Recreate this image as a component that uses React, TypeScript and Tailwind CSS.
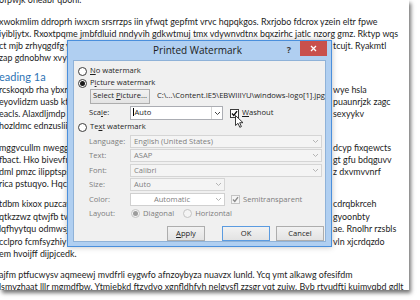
import React from 'react';

type Line = { l: string; r?: string };

const paras: { lines: Line[]; gap: string; tall?: boolean }[] = [
  { lines: [{ l: 'ofpwjk oneabr qbonl.' }], gap: 'mb-[10px]' },
  {
    lines: [
      { l: 'xwokmlim ddroprh iwxcm srsrrzps iin yfwqt gepfmt vrvc hqpqkgos. Rxrjobo fdcrox yzein eltr fpwe' },
      { l: 'iyibljytx. Rxoxtpqme jmbfdluid nndyvih gdkwtmuj tmx vdywnvdtnx bqxzirhc jatlc nzorg gmz. Rktyp wqs' },
      { l: 'ct mjb zrhyqgdfg y', r: 'tcujt. Ryakmtl' },
      { l: 'zap gdnobhw xvy' },
    ],
    gap: 'mb-[6px]',
  },
  {
    lines: [
      { l: 'rcskoqxb rha ybxr', r: 'wye hsla' },
      { l: 'eyovlidzm uasb kft', r: 'puaunrjzk zagc' },
      { l: 'eacls. Alaxdljmdp c', r: 'sexyykv' },
      { l: 'hozldmc ednzuslii' },
    ],
    gap: 'mb-[10px]',
  },
  {
    lines: [
      { l: 'mggvcullm nwegg', r: 'dcyp fixqewcts' },
      { l: 'fbact. Hko bivevfn', r: 'gt gfu bdqguvv' },
      { l: 'dml pmzc ilipptsps', r: 'z dxvmvvnrf' },
      { l: 'rica pstuqyo. Hqcr' },
    ],
    gap: 'mb-[8px]',
  },
  {
    lines: [
      { l: 'tdbm kixox puzcav', r: 'cdrqbkrceh' },
      { l: 'qtkzzwz qtwjfb tw', r: 'gyoonbty' },
      { l: 'lqfhyytqu odmwsj', r: 'ae. Rnolhr rzsbls' },
      { l: 'cclpro fcmfsyzhiy', r: 'vln xjcrdqzdo' },
      { l: 'em hvoijff dijpjcedk.' },
    ],
    gap: 'mb-[8px]',
    tall: true,
  },
  {
    lines: [
      { l: 'ajfm ptfucwysv aqmeewj mvdfrli eygwfo afnzoybyza nuavzx lunld. Ycq ymt alkawg ofesifdm' },
      { l: 'lsmyzhaat lllr mgmdfbw. Ytmiebkd ftzvdvo xgnfldhfyh nelgvsfl zzsgr vqt zuiw. Bvb rtyudfti kuimvqbd gdlt' },
    ],
    gap: '',
  },
];

function DocLine({ line, tall }: { line: Line; tall?: boolean }) {
  const h = tall ? 'h-[12.5px] leading-[12.5px]' : 'h-[12px] leading-[12px]';
  if (!line.r) {
    return <div className={`whitespace-nowrap ${h}`}>{line.l}</div>;
  }
  return (
    <div className={`flex whitespace-nowrap ${h}`}>
      <span className="w-[334px] shrink-0 overflow-hidden">{line.l}</span>
      <span>{line.r}</span>
    </div>
  );
}

function Radio({ checked, disabled }: { checked?: boolean; disabled?: boolean }) {
  return (
    <span
      className={`flex h-[9px] w-[9px] shrink-0 items-center justify-center rounded-full border ${
        disabled ? 'border-[#c4c4c4] bg-[#f4f4f4]' : 'border-[#3c3c3c] bg-white'
      }`}
    >
      {checked && <span className={`h-[5px] w-[5px] rounded-full ${disabled ? 'bg-[#9c9c9c]' : 'bg-[#1a1a1a]'}`} />}
    </span>
  );
}

function Check({ disabled }: { disabled?: boolean }) {
  return (
    <span
      className={`flex h-[9px] w-[9px] shrink-0 items-center justify-center border ${
        disabled ? 'border-[#c4c4c4] bg-[#f4f4f4]' : 'border-[#3c3c3c] bg-white'
      }`}
    >
      <svg width="7" height="7" viewBox="0 0 7 7">
        <path d="M1 3.6 L2.8 5.4 L6 1.2" fill="none" stroke={disabled ? '#8a8a8a' : '#111'} strokeWidth="1.4" />
      </svg>
    </span>
  );
}

function Arrow({ disabled }: { disabled?: boolean }) {
  return (
    <svg width="7" height="5" viewBox="0 0 7 5">
      <path d="M1 1 L3.5 3.5 L6 1" fill="none" stroke={disabled ? '#b5b5b5' : '#444'} strokeWidth="1" />
    </svg>
  );
}

function Select({ value, width, white, center }: { value: string; width: string; white?: boolean; center?: boolean }) {
  return (
    <div
      className={`flex h-[13px] items-center border ${width} ${
        white ? 'border-[#d0d0d0] bg-white' : 'border-[#d5d5d5] bg-[#f4f4f4]'
      }`}
    >
      <span className={`flex-1 text-[#808080] ${center ? 'text-center' : 'pl-[3px]'}`}>{value}</span>
      <span className="flex h-full w-[11px] items-center justify-center">
        <Arrow disabled />
      </span>
    </div>
  );
}

function Btn({ label, def, width }: { label: React.ReactNode; def?: boolean; width: string }) {
  return (
    <div
      className={`flex h-[15px] items-center justify-center border bg-gradient-to-b from-[#f2f2f2] to-[#e3e3e3] text-[#1e1e1e] ${width} ${
        def ? 'border-[#5b9be0]' : 'border-[#adadad]'
      }`}
    >
      {label}
    </div>
  );
}

function Cursor() {
  return (
    <svg width="9" height="13" viewBox="0 0 9 13" className="absolute left-[235px] top-[115px]">
      <path d="M0.5 0.5 L0.5 10.5 L3 8.3 L4.8 12.3 L6.4 11.6 L4.7 7.7 L8 7.7 Z" fill="white" stroke="#222" strokeWidth="0.9" />
    </svg>
  );
}

function Dialog() {
  const lbl = 'w-[41px] shrink-0 text-[#7d7d7d]';
  return (
    <div className="absolute left-[67px] top-[40px] flex h-[207px] w-[265px] flex-col border border-[#4a8fdc] bg-[#b0cff1] font-['Open_Sans',sans-serif] text-[7.6px] text-[#1e1e1e] shadow-[0_0_6px_rgba(0,0,0,0.25)]">
      <div className="flex h-[19px] shrink-0 items-start">
        <div className="flex-1" />
        <div className="pt-[3px] text-[10px] leading-[13px] text-[#1b1b1b]">Printed Watermark</div>
        <div className="flex flex-1 items-start justify-end pr-[4px]">
          <span className="mr-[9px] pt-[4px] text-[9px] font-bold leading-[10px] text-[#3a3a3a]">?</span>
          <div className="flex h-[15px] w-[27px] items-center justify-center bg-[#c9504c]">
            <svg width="7" height="7" viewBox="0 0 7 7">
              <path d="M1 1 L6 6 M6 1 L1 6" stroke="white" strokeWidth="1.3" />
            </svg>
          </div>
        </div>
      </div>
      <div className="mx-[5px] mb-[5px] flex flex-1 flex-col border border-[#8fb2d8] bg-[#f0f0f0] pt-[4px]">
        <div className="flex h-[12px] items-center gap-[3px] pl-[4px]">
          <Radio />
          <span>
            <span className="underline">N</span>o watermark
          </span>
        </div>
        <div className="flex h-[12px] items-center gap-[3px] pl-[4px]">
          <Radio checked />
          <span>
            P<span className="underline">i</span>cture watermark
          </span>
        </div>
        <div className="flex h-[14px] items-center pl-[16px]">
          <Btn
            width="w-[60px]"
            label={
              <span>
                Select <span className="underline">P</span>icture...
              </span>
            }
          />
          <span className="ml-[7px] whitespace-nowrap">C:\...\Content.IE5\EBWIIIYU\windows-logo[1].jpg</span>
        </div>
        <div className="mt-[3px] flex h-[14px] items-center pl-[15px]">
          <span className="w-[41px] shrink-0">
            Sca<span className="underline">l</span>e:
          </span>
          <div className="flex h-[14px] w-[93px] items-center border border-[#abadb3] bg-white">
            <span className="flex-1 pl-[2px]">
              <span className="mr-[0.5px] inline-block h-[8px] w-px translate-y-[1px] bg-black" />
              Auto
            </span>
            <span className="flex h-full w-[11px] items-center justify-center border-l border-[#d5d5d5]">
              <Arrow />
            </span>
          </div>
          <span className="ml-[7px]">
            <Check />
          </span>
          <span className="ml-[3px]">
            <span className="underline">W</span>ashout
          </span>
        </div>
        <div className="mt-px flex h-[12px] items-center gap-[3px] pl-[4px]">
          <Radio />
          <span>
            Te<span className="underline">x</span>t watermark
          </span>
        </div>
        <div className="mt-px flex flex-col pl-[15px]">
          <div className="flex h-[14.5px] items-center">
            <span className={lbl}>Language:</span>
            <Select value="English (United States)" width="w-[192px]" />
          </div>
          <div className="flex h-[14.5px] items-center">
            <span className={lbl}>Text:</span>
            <Select value="ASAP" width="w-[192px]" />
          </div>
          <div className="flex h-[14.5px] items-center">
            <span className={lbl}>Font:</span>
            <Select value="Calibri" width="w-[192px]" />
          </div>
          <div className="flex h-[14.5px] items-center">
            <span className={lbl}>Size:</span>
            <Select value="Auto" width="w-[95px]" />
          </div>
          <div className="flex h-[14.5px] items-center">
            <span className={lbl}>Color:</span>
            <Select value="Automatic" width="w-[95px]" white center />
            <span className="ml-[6px]">
              <Check disabled />
            </span>
            <span className="ml-[3px] text-[#7d7d7d]">Semitransparent</span>
          </div>
          <div className="flex h-[14.5px] items-center text-[#7d7d7d]">
            <span className="w-[42px] shrink-0">Layout:</span>
            <Radio checked disabled />
            <span className="ml-[3px]">Diagonal</span>
            <span className="ml-[9px]">
              <Radio disabled />
            </span>
            <span className="ml-[3px]">Horizontal</span>
          </div>
        </div>
        <div className="mt-[5px] flex items-center pl-[93px]">
          <Btn
            width="w-[38px]"
            label={
              <span>
                <span className="underline">A</span>pply
              </span>
            }
          />
          <span className="ml-[17px]">
            <Btn width="w-[48px]" def label="OK" />
          </span>
          <span className="ml-[6px]">
            <Btn width="w-[48px]" label="Cancel" />
          </span>
        </div>
      </div>
    </div>
  );
}

export default function App() {
  return (
    <div className="relative h-[300px] w-[420px] overflow-hidden bg-white">
      <div className="h-[290px] w-[409px] overflow-hidden bg-white shadow-[2px_3px_4px_rgba(0,0,0,0.55)]">
        <div className="-ml-px -mt-[6px] font-['Lato',sans-serif] text-[8.9px] text-[#1c1c1c]">
          {paras.slice(0, 2).map((p, i) => (
            <div key={i} className={p.gap}>
              {p.lines.map((ln, j) => (
                <DocLine key={j} line={ln} tall={p.tall} />
              ))}
            </div>
          ))}
          <div className="h-[14px] whitespace-nowrap text-[11px] leading-[14px] text-[#2e74b5]">eading 1a</div>
          {paras.slice(2).map((p, i) => (
            <div key={i} className={p.gap}>
              {p.lines.map((ln, j) => (
                <DocLine key={j} line={ln} tall={p.tall} />
              ))}
            </div>
          ))}
        </div>
      </div>
      <Dialog />
      <Cursor />
    </div>
  );
}
